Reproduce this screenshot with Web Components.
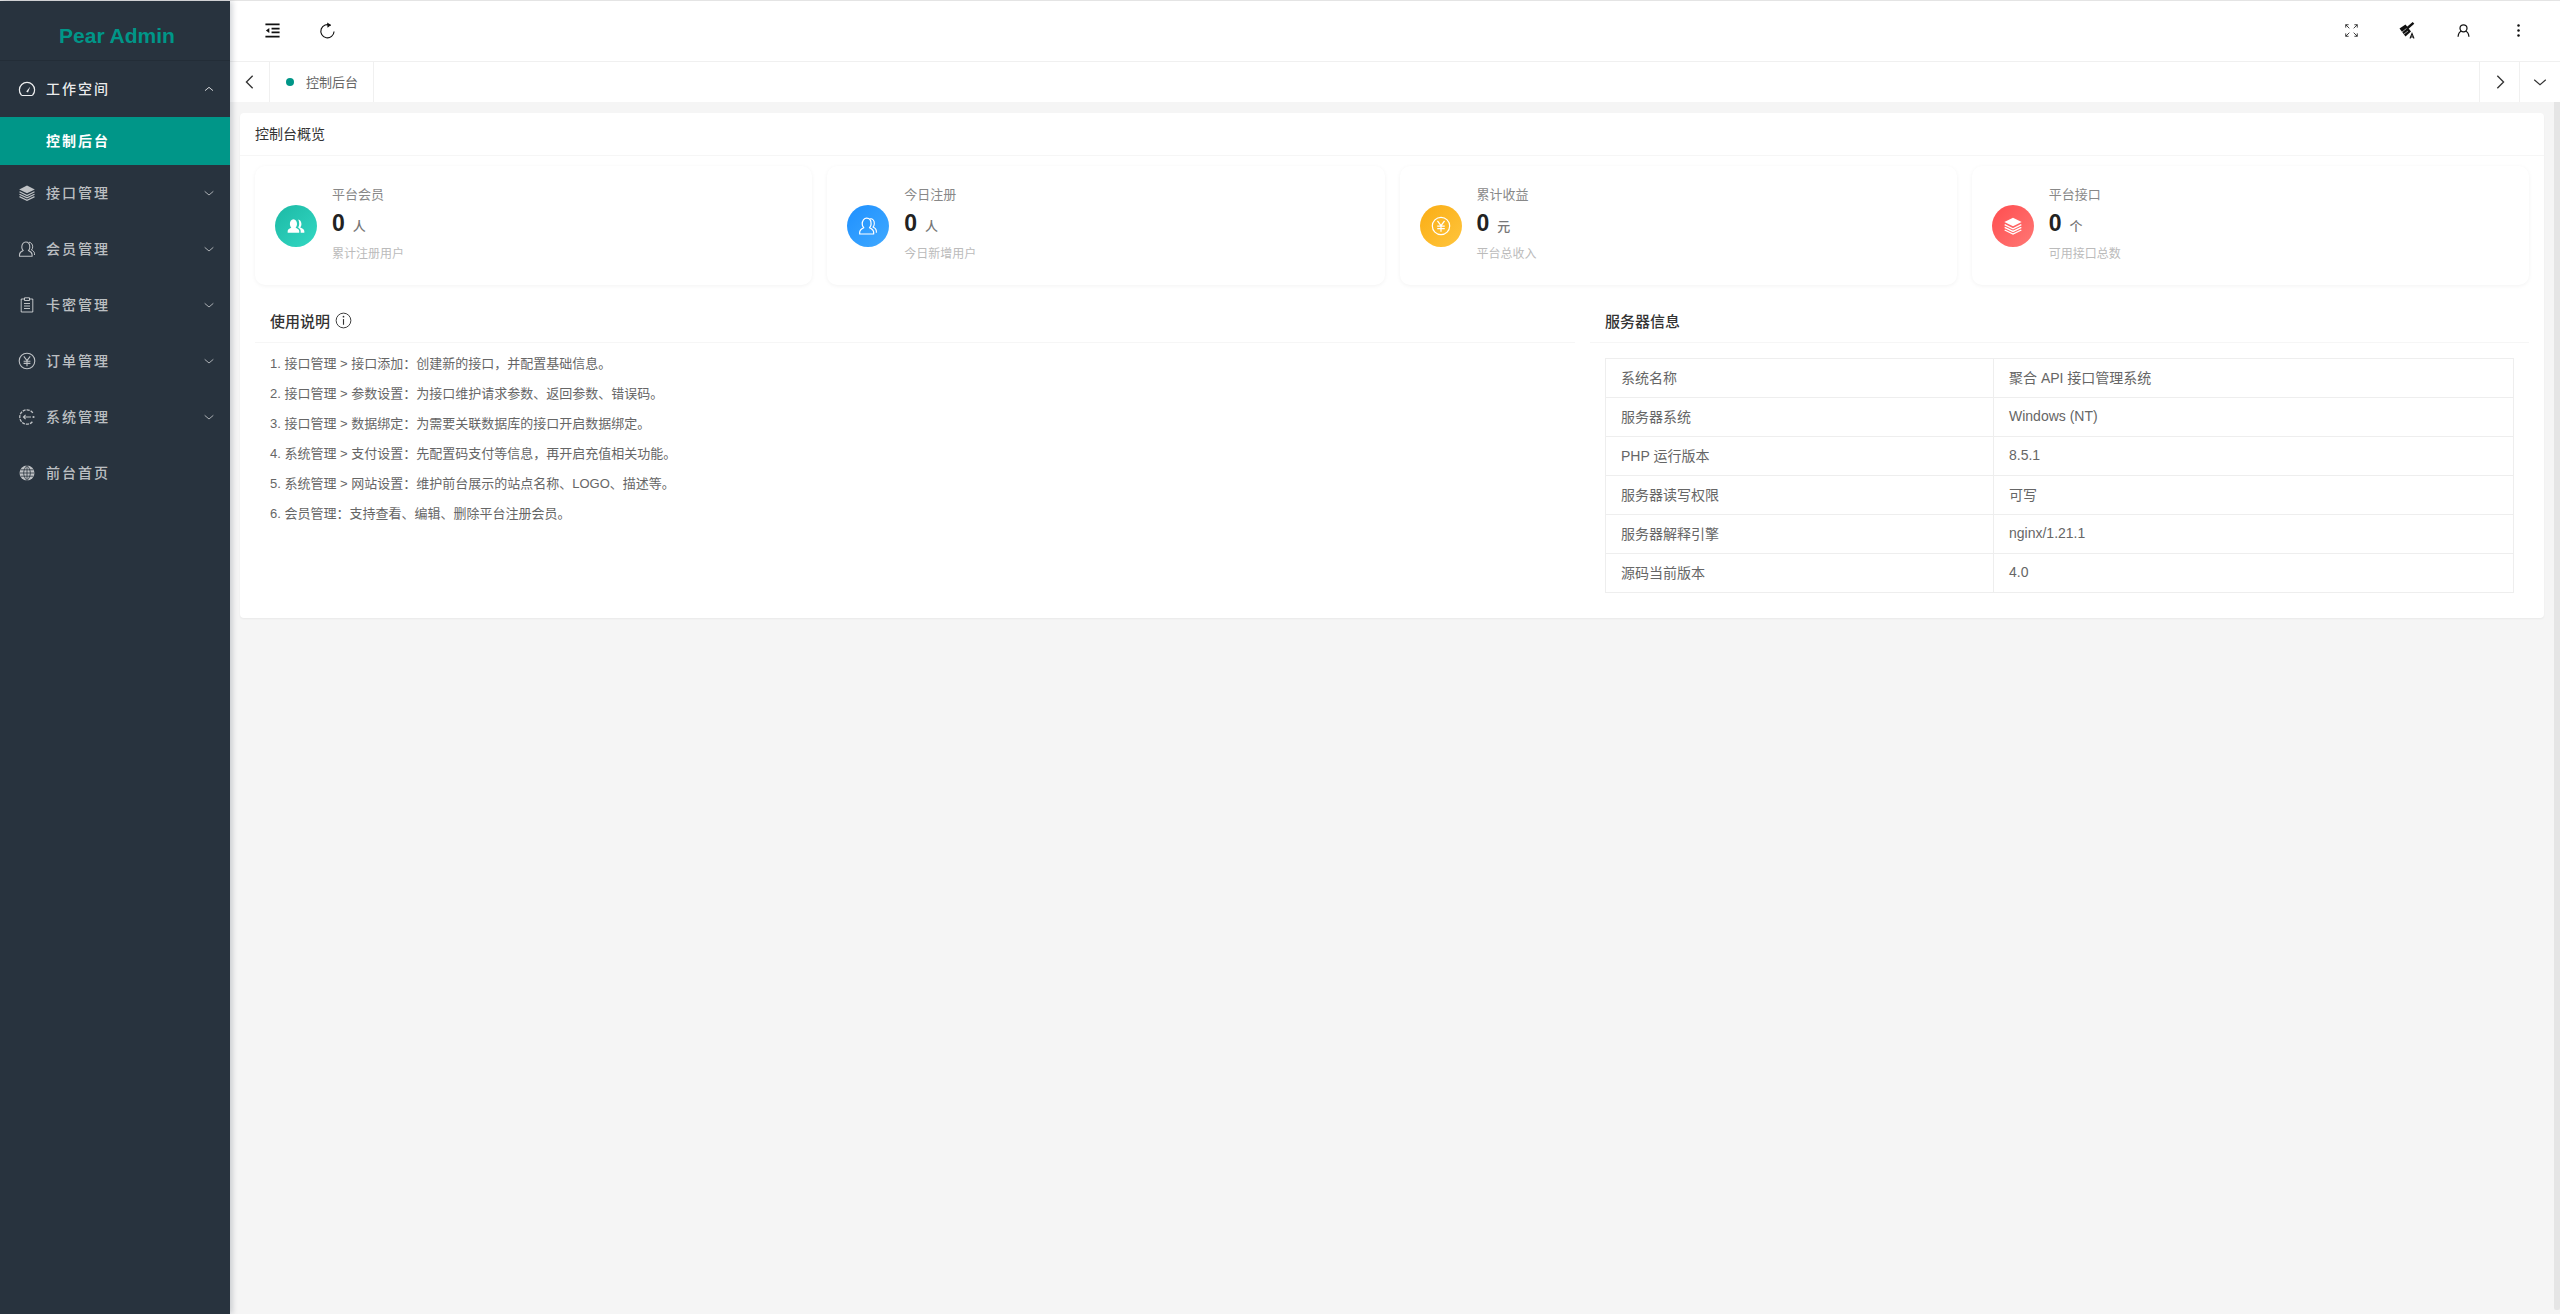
<!DOCTYPE html>
<html lang="zh-CN">
<head>
<meta charset="utf-8">
<title>Pear Admin</title>
<style>
  html, body { margin: 0; height: 100%; }
  body { font-family: "Liberation Sans", "Noto Sans CJK SC", sans-serif; overflow: hidden; }
</style>
</head>
<body>
<pear-app>
  <pear-sidebar slot="side">
    <side-item icon="gauge" open>工作空间</side-item>
    <side-sub active>控制后台</side-sub>
    <side-item icon="layers" arrow>接口管理</side-item>
    <side-item icon="users" arrow>会员管理</side-item>
    <side-item icon="clip" arrow>卡密管理</side-item>
    <side-item icon="yen" arrow>订单管理</side-item>
    <side-item icon="sys" arrow>系统管理</side-item>
    <side-item icon="globe">前台首页</side-item>
  </pear-sidebar>
  <pear-header slot="top"></pear-header>
  <pear-tabs slot="top">控制后台</pear-tabs>
  <overview-card slot="main" heading="控制台概览">
    <stat-card slot="stats" label="平台会员" value="0" unit="人" hint="累计注册用户" tone="teal" icon="usersfill"></stat-card>
    <stat-card slot="stats" label="今日注册" value="0" unit="人" hint="今日新增用户" tone="blue" icon="users"></stat-card>
    <stat-card slot="stats" label="累计收益" value="0" unit="元" hint="平台总收入" tone="amber" icon="yen"></stat-card>
    <stat-card slot="stats" label="平台接口" value="0" unit="个" hint="可用接口总数" tone="red" icon="layers"></stat-card>
    <help-panel slot="left">
      <span>1. 接口管理 &gt; 接口添加：创建新的接口，并配置基础信息。</span>
      <span>2. 接口管理 &gt; 参数设置：为接口维护请求参数、返回参数、错误码。</span>
      <span>3. 接口管理 &gt; 数据绑定：为需要关联数据库的接口开启数据绑定。</span>
      <span>4. 系统管理 &gt; 支付设置：先配置码支付等信息，再开启充值相关功能。</span>
      <span>5. 系统管理 &gt; 网站设置：维护前台展示的站点名称、LOGO、描述等。</span>
      <span>6. 会员管理：支持查看、编辑、删除平台注册会员。</span>
    </help-panel>
    <server-panel slot="right"></server-panel>
  </overview-card>
</pear-app>

<script>
const ICONS = {
  gauge: '<path d="M3.300 15A7.600 7.600 0 1 1 14.700 15Q14.300 15.500 13.600 15.500H4.400Q3.700 15.500 3.300 15Z" fill="none" stroke="currentColor" stroke-width="1.200" stroke-linejoin="round"/><path d="M8.200 11.500 12.200 6.800 10 12.600Z" fill="currentColor"/>',
  layers: '<path d="M9 1.500 16.800 5.400 9 9.300 1.200 5.400Z" fill="currentColor"/><path d="M1.500 7.800 9 11.500 16.500 7.800M1.500 10.200 9 13.900 16.500 10.200M1.500 12.600 9 16.300 16.500 12.600" fill="none" stroke="currentColor" stroke-width="1.200"/>',
  users: '<path d="M1.500 16.200v-1.400c0-2 2-3.400 3.700-4.200A4.600 4.600 0 0 1 3.800 7.200C3.800 4.200 5.400 2 7.800 2s4 2.200 4 5.200c0 1.300-.5 2.500-1.400 3.400 1.700.8 3.700 2.200 3.700 4.200v1.400Z" fill="none" stroke="currentColor" stroke-width="1.100" stroke-linejoin="round"/><path d="M11 2.200c2.200.2 3.700 2.200 3.700 4.600 0 1.200-.4 2.300-1.200 3.200 1.300.6 3 1.800 3 3.600V15" fill="none" stroke="currentColor" stroke-width="1"/>',
  usersfill: '<path d="M1.500 15v-1.500c0-1.500 2-2.300 3.300-2.900-.8-.8-1.300-2-1.300-3.300C3.500 5 4.600 3 6.700 3s3.200 2 3.200 4.300c0 1.300-.5 2.500-1.300 3.300 1.300.6 3.300 1.400 3.300 2.900V15Z" fill="currentColor"/><path d="M11 3.200c1.800.3 2.900 2 2.900 4.100 0 1.200-.4 2.300-1.100 3.100 1.200.6 3.700 1.400 3.700 3V15h-3.300v-1.500c0-1.400-1-2.400-2.300-3.100.7-.9 1-2 1-3.100 0-1.600-.3-3-.9-4.100Z" fill="currentColor"/>',
  clip: '<path d="M6.500 3H3.200v13h11.600V3h-3.300" fill="none" stroke="currentColor" stroke-width="1"/><path d="M6.500 1.800h5v2.700h-5Z" fill="none" stroke="currentColor" stroke-width="1"/><path d="M6 7.500h6M6 10h6M6 12.500h6" stroke="currentColor" stroke-width="1"/>',
  yen: '<circle cx="9" cy="9" r="7.800" fill="none" stroke="currentColor" stroke-width="1.100"/><path d="M5.800 4.400 9 8.700 12.200 4.400M9 8.700V14.200M5.600 9.200h6.800M5.600 11.400h6.800" fill="none" stroke="currentColor" stroke-width="1.100"/>',
  sys: '<path d="M14.800 4.800A7.200 7.200 0 1 0 14.800 13.200" fill="none" stroke="currentColor" stroke-width="1.300" stroke-dasharray="3 1"/><circle cx="15.500" cy="9" r="1.100" fill="currentColor"/><path d="M5 9h8M7.600 6.800 5.400 9l2.200 2.200" fill="none" stroke="currentColor" stroke-width="1.100"/>',
  globe: '<circle cx="9" cy="9" r="7.500" fill="currentColor"/><path d="M1.500 9h15M2.500 5.800h13M2.500 12.200h13M9 1.500v15M9 1.500c-4.400 4-4.400 11 0 15M9 1.500c4.400 4 4.400 11 0 15" fill="none" stroke="#28333e" stroke-width=".8"/>',
  up: '<path d="M3 11.500 9 6.500l6 5" fill="none" stroke="currentColor" stroke-width="1.300"/>',
  down: '<path d="M2.500 6.500 9 12l6.500-5.500" fill="none" stroke="currentColor" stroke-width="1.300"/>',
  left: '<path d="M12 2 5 9l7 7" fill="none" stroke="currentColor" stroke-width="1.500"/>',
  right: '<path d="M6 2l7 7-7 7" fill="none" stroke="currentColor" stroke-width="1.500"/>',
  menu: '<path d="M1.500 2.500h15M8 7h8.500M8 11h8.500M1.500 15.500h15" fill="none" stroke="currentColor" stroke-width="1.700"/><path d="M5.600 6.400 2 9l3.600 2.600Z" fill="currentColor"/>',
  refresh: '<path d="M11.500 3.200A7 7 0 1 0 16 9" fill="none" stroke="currentColor" stroke-width="1.200" transform="rotate(8 9 9)"/><path d="M8.600 .6 12.800 3.200 9 6Z" fill="currentColor"/>',
  full: '<path d="M1 5V1H5M1 1 6 6M13 1H17V5M17 1 12 6M1 13V17H5M1 17 6 12M17 13V17H13M17 17 12 12" fill="none" stroke="currentColor" stroke-width="1.100"/>',
  brush: '<path d="M1.500 7.500 7.500 3.500 13 10.500 7.500 15.500Z" fill="currentColor"/><path d="M4 11 8.500 7.500M6 13 10 10" stroke="#fff" stroke-width=".6"/><path d="M9.500 7 15.500 1.800" stroke="currentColor" stroke-width="2.400"/><path d="M12 17.500 14 12.500 16 17.500M12.800 16h2.400" fill="none" stroke="currentColor" stroke-width="1.100"/>',
  user: '<circle cx="9" cy="6.300" r="4.200" fill="none" stroke="currentColor" stroke-width="1.500"/><path d="M2.500 16.500c.3-3.700 2.600-6.300 4-6.900M15.500 16.500c-.3-3.700-2.600-6.300-4-6.900" fill="none" stroke="currentColor" stroke-width="1.500"/>',
  dots: '<circle cx="9" cy="3" r="1.500" fill="currentColor"/><circle cx="9" cy="9" r="1.500" fill="currentColor"/><circle cx="9" cy="15" r="1.500" fill="currentColor"/>',
  info: '<circle cx="9" cy="9" r="7.800" fill="none" stroke="currentColor" stroke-width="1"/><path d="M9 7.500v6" stroke="currentColor" stroke-width="1.200"/><circle cx="9" cy="5" r=".9" fill="currentColor"/>'
};

class PearIcon extends HTMLElement {
  connectedCallback() {
    const s = this.getAttribute('size') || 16;
    this.attachShadow({ mode: 'open' }).innerHTML = `
      <style>:host { display: inline-flex; flex: none; width: ${s}px; height: ${s}px; } svg { width: 100%; height: 100%; display: block; }</style>
      <svg viewBox="0 0 18 18">${ICONS[this.getAttribute('name')] || ''}</svg>`;
  }
}

class PearApp extends HTMLElement {
  constructor() {
    super();
    this.attachShadow({ mode: 'open' }).innerHTML = `
      <style>
        :host { display: grid; grid-template-columns: 230px 1fr; height: 100vh; background: #f5f5f5; box-sizing: border-box; border-top: 1px solid #e4e4e4; }
        .side { position: relative; z-index: 2; min-height: 0; display: flex; }
        .right { min-width: 0; display: flex; flex-direction: column; }
        .main { flex: 1; display: flex; min-height: 0; }
        .page { flex: 1; min-width: 0; padding: 11px 10px 0; }
        .bar { width: 6px; background: #e5e5e5; margin-bottom: 4px; border-radius: 0 0 2px 2px; }
      </style>
      <div class="side"><slot name="side"></slot></div>
      <div class="right">
        <slot name="top"></slot>
        <div class="main"><div class="page"><slot name="main"></slot></div><div class="bar"></div></div>
      </div>`;
  }
}

class PearSidebar extends HTMLElement {
  constructor() {
    super();
    this.attachShadow({ mode: 'open' }).innerHTML = `
      <style>
        :host { display: block; width: 230px; background: #28333e; box-shadow: 2px 0 6px rgba(0,21,41,.2); }
        .logo { height: 60px; border-bottom: 1px solid #232d37; display: flex; align-items: center; justify-content: center; color: #009688; font: bold 21px/1 "Liberation Sans", sans-serif; padding: 9px 0 0 4px; box-sizing: border-box; }
      </style>
      <div class="logo">Pear Admin</div>
      <slot></slot>`;
  }
}

class SideItem extends HTMLElement {
  constructor() {
    super();
    const open = this.hasAttribute('open');
    const arrow = open ? 'up' : this.hasAttribute('arrow') ? 'down' : '';
    this.attachShadow({ mode: 'open' }).innerHTML = `
      <style>
        :host { display: flex; align-items: center; height: 56px; padding-left: 18px; color: rgba(255,255,255,.7); font-size: 14px; letter-spacing: 2px; font-weight: 500; }
        :host([open]) { color: rgba(255,255,255,.92); }
        .txt { margin-left: 10px; flex: 1; padding-bottom: 2px; }
        .arr { margin-right: 15px; }
      </style>
      <pear-icon name="${this.getAttribute('icon')}" size="18"></pear-icon>
      <span class="txt"><slot></slot></span>
      ${arrow ? `<pear-icon class="arr" name="${arrow}" size="12"></pear-icon>` : ''}`;
  }
}

class SideSub extends HTMLElement {
  constructor() {
    super();
    this.attachShadow({ mode: 'open' }).innerHTML = `
      <style>
        :host { display: flex; align-items: center; height: 48px; padding: 0 0 2px 46px; box-sizing: border-box; background: #009688; color: #fff; font-size: 14px; letter-spacing: 2px; font-weight: 700; }
      </style><slot></slot>`;
  }
}

class PearHeader extends HTMLElement {
  constructor() {
    super();
    this.attachShadow({ mode: 'open' }).innerHTML = `
      <style>
        :host { display: flex; align-items: center; height: 61px; background: #fff; color: #111; padding: 0 34px 2px 34px; border-bottom: 1px solid #f0f0f0; box-sizing: border-box; }
        .spacer { flex: 1; }
        .a { margin-left: 40px; }
      </style>
      <pear-icon name="menu" size="17"></pear-icon>
      <pear-icon class="a" style="margin-left:38px" name="refresh" size="17"></pear-icon>
      <div class="spacer"></div>
      <pear-icon name="full" size="13"></pear-icon>
      <pear-icon class="a" name="brush" size="18"></pear-icon>
      <pear-icon class="a" name="user" size="15"></pear-icon>
      <pear-icon class="a" name="dots" size="15"></pear-icon>`;
  }
}

class PearTabs extends HTMLElement {
  constructor() {
    super();
    this.attachShadow({ mode: 'open' }).innerHTML = `
      <style>
        :host { display: flex; height: 40px; background: #fff; color: #333; font-size: 13px; }
        .btn { width: 40px; display: flex; align-items: center; justify-content: center; box-sizing: border-box; }
        .btn.l { border-right: 1px solid #f0f0f0; }
        .btn.r { border-left: 1px solid #f0f0f0; }
        .tab { display: flex; align-items: center; padding: 0 15px 2px 15px; border-right: 1px solid #f0f0f0; color: #666; height: 100%; box-sizing: border-box; }
        .dot { width: 8px; height: 8px; border-radius: 50%; background: #009688; margin: 2px 12px 0 1px; }
        .spacer { flex: 1; }
      </style>
      <div class="btn l"><pear-icon name="left" size="16"></pear-icon></div>
      <div class="tab"><span class="dot"></span><slot></slot></div>
      <div class="spacer"></div>
      <div class="btn r"><pear-icon name="right" size="16"></pear-icon></div>
      <div class="btn r" style="width:41px"><pear-icon name="down" size="16"></pear-icon></div>`;
  }
}

class OverviewCard extends HTMLElement {
  constructor() {
    super();
    this.attachShadow({ mode: 'open' }).innerHTML = `
      <style>
        :host { display: block; background: #fff; border-radius: 4px; box-shadow: 0 1px 2px rgba(0,0,0,.05); }
        .head { height: 42px; display: flex; align-items: center; padding: 0 15px 2px; box-sizing: border-box; font-size: 14px; color: #333; border-bottom: 0; }
        .line { height: 1px; background: #f6f6f6; }
        .body { padding: 10px 15px 25px; }
        .stats { display: grid; grid-template-columns: repeat(4, 1fr); gap: 15px; }
        .cols { display: grid; grid-template-columns: 1320fr 939fr; gap: 15px; margin-top: 7px; }
      </style>
      <div class="head">${this.getAttribute('heading')}</div>
      <div class="line"></div>
      <div class="body">
        <div class="stats"><slot name="stats"></slot></div>
        <div class="cols"><slot name="left"></slot><slot name="right"></slot></div>
      </div>`;
  }
}

const TONES = {
  teal: 'linear-gradient(135deg,#1cb9a5,#33d8c3)',
  blue: 'linear-gradient(135deg,#1e90ff,#40a9ff)',
  amber: 'linear-gradient(135deg,#faad14,#ffc53d)',
  red: 'linear-gradient(135deg,#ff4d4f,#ff7875)'
};

class StatCard extends HTMLElement {
  constructor() {
    super();
    const a = n => this.getAttribute(n);
    this.attachShadow({ mode: 'open' }).innerHTML = `
      <style>
        :host { display: flex; align-items: center; height: 119px; padding-left: 20px; border-radius: 10px; background: #fff; box-shadow: 0 1px 4px rgba(0,0,0,.05); box-sizing: border-box; }
        .circle { width: 42px; height: 42px; border-radius: 50%; background: ${TONES[a('tone')]}; color: #fff; display: flex; align-items: center; justify-content: center; margin-right: 15px; }
        .text { margin-top: -1px; }
        .label { font-size: 13px; color: #888; line-height: 18px; margin-top: -2px; }
        .num { display: flex; align-items: baseline; height: 26px; margin-top: 6px; line-height: 26px; color: #222; font-size: 23px; font-weight: 700; }
        .unit { font-size: 13px; color: #777; font-weight: 500; margin-left: 8px; }
        .hint { font-size: 12px; color: #bbb; line-height: 16px; margin-top: 10px; }
      </style>
      <div class="circle"><pear-icon name="${a('icon')}" size="20"></pear-icon></div>
      <div class="text">
        <div class="label">${a('label')}</div>
        <div class="num">${a('value')}<span class="unit">${a('unit')}</span></div>
        <div class="hint">${a('hint')}</div>
      </div>`;
  }
}

class PanelTitle extends HTMLElement {
  constructor() {
    super();
    this.attachShadow({ mode: 'open' }).innerHTML = `
      <style>
        :host { display: flex; align-items: center; height: 51px; padding: 6px 0 0 15px; box-sizing: border-box; font-size: 15px; font-weight: 500; color: #333; border-bottom: 1px solid #f6f6f6; }
      </style><slot></slot>`;
  }
}

class HelpPanel extends HTMLElement {
  constructor() {
    super();
    this.attachShadow({ mode: 'open' }).innerHTML = `
      <style>
        :host { display: block; }
        .list { display: flex; flex-direction: column; padding: 6px 15px 0; font-size: 13px; color: #666; }
        ::slotted(span) { display: block; line-height: 30px; height: 30px; }
        pear-icon { margin-left: 5px; color: #333; }
      </style>
      <panel-title>使用说明<pear-icon name="info" size="17"></pear-icon></panel-title>
      <div class="list"><slot></slot></div>`;
  }
}

class ServerPanel extends HTMLElement {
  constructor() {
    super();
    const rows = [
      ['系统名称', '聚合 API 接口管理系统'],
      ['服务器系统', 'Windows (NT)'],
      ['PHP 运行版本', '8.5.1'],
      ['服务器读写权限', '可写'],
      ['服务器解释引擎', 'nginx/1.21.1'],
      ['源码当前版本', '4.0']
    ];
    this.attachShadow({ mode: 'open' }).innerHTML = `
      <style>
        :host { display: block; }
        .wrap { padding: 15px 15px 0; }
        table { width: 100%; border-collapse: collapse; table-layout: fixed; font-size: 14px; color: #666; }
        td { border: 1px solid #eee; height: 39px; padding: 0 15px 2px; box-sizing: border-box; }
        td:first-child { width: 388px; }
      </style>
      <panel-title>服务器信息</panel-title>
      <div class="wrap"><table>${rows.map(r => `<tr><td>${r[0]}</td><td>${r[1]}</td></tr>`).join('')}</table></div>`;
  }
}

customElements.define('pear-icon', PearIcon);
customElements.define('pear-app', PearApp);
customElements.define('pear-sidebar', PearSidebar);
customElements.define('side-item', SideItem);
customElements.define('side-sub', SideSub);
customElements.define('pear-header', PearHeader);
customElements.define('pear-tabs', PearTabs);
customElements.define('overview-card', OverviewCard);
customElements.define('stat-card', StatCard);
customElements.define('panel-title', PanelTitle);
customElements.define('help-panel', HelpPanel);
customElements.define('server-panel', ServerPanel);
</script>
</body>
</html>
